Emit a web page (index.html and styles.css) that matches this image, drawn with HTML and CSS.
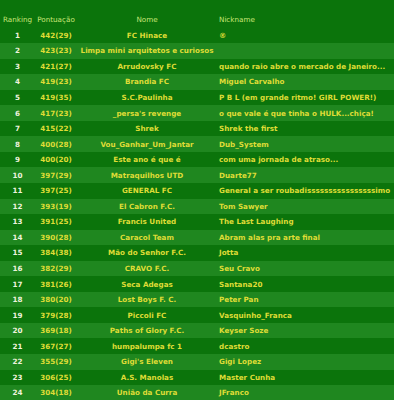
FILE: index.html
```html
<!DOCTYPE html>
<html>
<head>
<meta charset="utf-8">
<link rel="stylesheet" href="styles.css">
</head>
<body>
<div class="board">
  <div class="row head">
    <div class="c rank">Ranking</div>
    <div class="c pts">Pontuação</div>
    <div class="c name">Nome</div>
    <div class="c nick">Nickname</div>
  </div>
  <div class="row"><div class="c rank">1</div><div class="c pts">442(29)</div><div class="c name">FC Hinace</div><div class="c nick">®</div></div>
  <div class="row alt"><div class="c rank">2</div><div class="c pts">423(23)</div><div class="c name wide">Limpa mini arquitetos e curiosos</div><div class="c nick"></div></div>
  <div class="row"><div class="c rank">3</div><div class="c pts">421(27)</div><div class="c name">Arrudovsky FC</div><div class="c nick">quando raio abre o mercado de Janeiro...</div></div>
  <div class="row alt"><div class="c rank">4</div><div class="c pts">419(23)</div><div class="c name">Brandia FC</div><div class="c nick">Miguel Carvalho</div></div>
  <div class="row"><div class="c rank">5</div><div class="c pts">419(35)</div><div class="c name">S.C.Paulinha</div><div class="c nick">P B L (em grande ritmo! GIRL POWER!)</div></div>
  <div class="row alt"><div class="c rank">6</div><div class="c pts">417(23)</div><div class="c name">_persa's revenge</div><div class="c nick">o que vale é que tinha o HULK...chiça!</div></div>
  <div class="row"><div class="c rank">7</div><div class="c pts">415(22)</div><div class="c name">Shrek</div><div class="c nick">Shrek the first</div></div>
  <div class="row alt"><div class="c rank">8</div><div class="c pts">400(28)</div><div class="c name">Vou_Ganhar_Um_Jantar</div><div class="c nick">Dub_System</div></div>
  <div class="row"><div class="c rank">9</div><div class="c pts">400(20)</div><div class="c name">Este ano é que é</div><div class="c nick">com uma jornada de atraso...</div></div>
  <div class="row alt"><div class="c rank">10</div><div class="c pts">397(29)</div><div class="c name">Matraquilhos UTD</div><div class="c nick">Duarte77</div></div>
  <div class="row"><div class="c rank">11</div><div class="c pts">397(25)</div><div class="c name">GENERAL FC</div><div class="c nick">General a ser roubadissssssssssssssssimo</div></div>
  <div class="row alt"><div class="c rank">12</div><div class="c pts">393(19)</div><div class="c name">El Cabron F.C.</div><div class="c nick">Tom Sawyer</div></div>
  <div class="row"><div class="c rank">13</div><div class="c pts">391(25)</div><div class="c name">Francis United</div><div class="c nick">The Last Laughing</div></div>
  <div class="row alt"><div class="c rank">14</div><div class="c pts">390(28)</div><div class="c name">Caracol Team</div><div class="c nick">Abram alas pra arte final</div></div>
  <div class="row"><div class="c rank">15</div><div class="c pts">384(38)</div><div class="c name">Mão do Senhor F.C.</div><div class="c nick">Jotta</div></div>
  <div class="row alt"><div class="c rank">16</div><div class="c pts">382(29)</div><div class="c name">CRAVO F.C.</div><div class="c nick">Seu Cravo</div></div>
  <div class="row"><div class="c rank">17</div><div class="c pts">381(26)</div><div class="c name">Seca Adegas</div><div class="c nick">Santana20</div></div>
  <div class="row alt"><div class="c rank">18</div><div class="c pts">380(20)</div><div class="c name">Lost Boys F. C.</div><div class="c nick">Peter Pan</div></div>
  <div class="row"><div class="c rank">19</div><div class="c pts">379(28)</div><div class="c name">Piccoli FC</div><div class="c nick">Vasquinho_Franca</div></div>
  <div class="row alt"><div class="c rank">20</div><div class="c pts">369(18)</div><div class="c name">Paths of Glory F.C.</div><div class="c nick">Keyser Soze</div></div>
  <div class="row"><div class="c rank">21</div><div class="c pts">367(27)</div><div class="c name">humpalumpa fc 1</div><div class="c nick">dcastro</div></div>
  <div class="row alt"><div class="c rank">22</div><div class="c pts">355(29)</div><div class="c name">Gigi's Eleven</div><div class="c nick">Gigi Lopez</div></div>
  <div class="row"><div class="c rank">23</div><div class="c pts">306(25)</div><div class="c name">A.S. Manolas</div><div class="c nick">Master Cunha</div></div>
  <div class="row alt"><div class="c rank">24</div><div class="c pts">304(18)</div><div class="c name">União da Curra</div><div class="c nick">JFranco</div></div>
</div>
</body>
</html>
```
FILE: styles.css
```css
html, body {
  margin: 0;
  padding: 0;
  background: #0b740b;
}
.board {
  padding-top: 12px;
  font-family: "DejaVu Sans", Verdana, sans-serif;
  font-size: 7.2px;
  font-weight: bold;
  color: #dedc36;
}
.row {
  display: grid;
  grid-template-columns: 35px 42px 140px 1fr;
  height: 15.55px;
  align-items: center;
  white-space: nowrap;
}
.row.alt {
  background: #1f871f;
}
.head {
  font-weight: normal;
  color: #c8e678;
}
.c {
  text-align: center;
}
.rank {
  color: #eef2dc;
}
.head .rank {
  color: #c8e678;
}
.nick {
  text-align: left;
  padding-left: 2px;
}
.name.wide {
  overflow: visible;
}
```
